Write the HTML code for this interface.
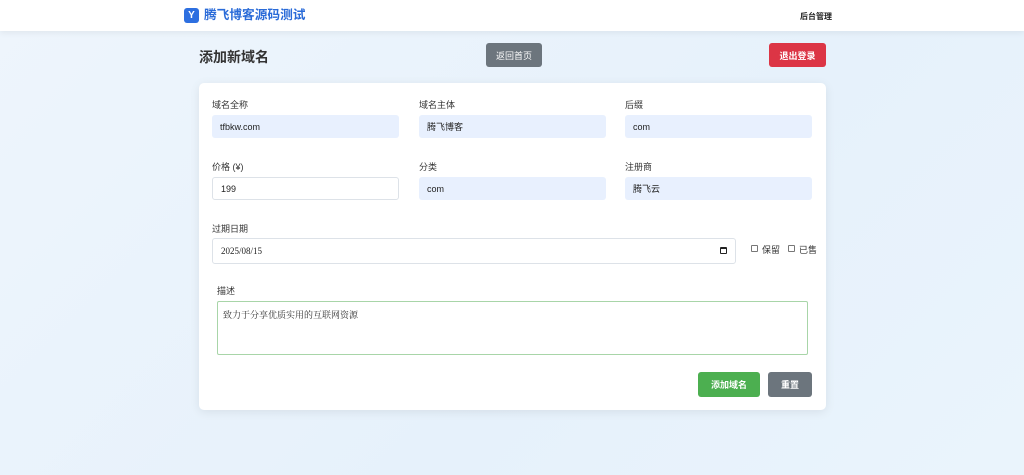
<!DOCTYPE html>
<html><head><meta charset="utf-8"><style>
*{box-sizing:border-box;margin:0;padding:0}
body{width:1024px;height:475px;overflow:hidden;background:linear-gradient(135deg,#eef5fc,#e6f1fb 60%,#eaf4fc);font-family:"Liberation Sans","Noto Sans CJK SC",sans-serif;position:relative;color:#333}
.a{position:absolute}
.nav{left:0;top:0;width:1024px;height:31px;background:#fff;box-shadow:0 2px 6px rgba(0,0,0,.06)}
.btn{position:absolute;color:#fff;font-size:9px;display:flex;align-items:center;justify-content:center;border-radius:3px}
.card{left:199px;top:83px;width:627px;height:327px;background:#fff;border-radius:5px;box-shadow:0 2px 10px rgba(0,0,0,.08)}
.lb{position:absolute;font-size:9px;color:#333}
.in{position:absolute;width:187px;height:23px;background:#e8f0fe;border-radius:3px;font-size:9px;padding-left:8px;display:flex;align-items:center;color:#222}
.w{background:#fff;border:1px solid #dde2e8}
.cb{position:absolute;width:7px;height:7px;border:1px solid #777;border-radius:1px}
</style></head><body>
<div class="a nav"></div>
<div class="a" style="left:184px;top:8px;width:15px;height:15px;background:#2d6fe0;border-radius:3px;color:#fff;font-size:10px;font-weight:bold;text-align:center;line-height:15px">Y</div>
<div class="a" style="left:204px;top:5px;font-size:12.7px;line-height:20px;font-weight:bold;color:#2a6bd8">腾飞博客源码测试</div>
<div class="a" style="left:800px;top:11px;font-size:8px;font-weight:bold;color:#222">后台管理</div>
<div class="a" style="left:199px;top:47px;font-size:14px;font-weight:bold;color:#333">添加新域名</div>
<div class="btn" style="left:486px;top:43px;width:56px;height:24px;background:#6c757d">返回首页</div>
<div class="btn" style="left:769px;top:43px;width:57px;height:24px;background:#dc3545;font-weight:bold">退出登录</div>
<div class="a card"></div>
<div class="lb" style="left:212px;top:98px">域名全称</div>
<div class="lb" style="left:419px;top:98px">域名主体</div>
<div class="lb" style="left:625px;top:98px">后缀</div>
<div class="in" style="left:212px;top:115px">tfbkw.com</div>
<div class="in" style="left:419px;top:115px">腾飞博客</div>
<div class="in" style="left:625px;top:115px">com</div>
<div class="lb" style="left:212px;top:160px">价格 (¥)</div>
<div class="lb" style="left:419px;top:160px">分类</div>
<div class="lb" style="left:625px;top:160px">注册商</div>
<div class="in w" style="left:212px;top:177px">199</div>
<div class="in" style="left:419px;top:177px">com</div>
<div class="in" style="left:625px;top:177px">腾飞云</div>
<div class="lb" style="left:212px;top:222px">过期日期</div>
<div class="in w" style="left:212px;top:238px;width:524px;height:26px;font-family:'Liberation Serif',serif;font-size:9px">2025/08/15</div>
<div class="a" style="left:720px;top:247px;width:7px;height:7px;border:1.5px solid #222;border-top-width:2.5px;border-radius:1px"></div>
<div class="cb" style="left:751px;top:245px"></div>
<div class="lb" style="left:762px;top:243px">保留</div>
<div class="cb" style="left:788px;top:245px"></div>
<div class="lb" style="left:799px;top:243px">已售</div>
<div class="lb" style="left:217px;top:284px">描述</div>
<div class="a" style="left:217px;top:301px;width:591px;height:54px;border:1px solid #a8d5a8;border-radius:2px;font-size:9px;padding:6px 5px;font-family:'Liberation Serif','Noto Serif CJK SC',serif">致力于分享优质实用的互联网资源</div>
<div class="btn" style="left:698px;top:372px;width:62px;height:25px;background:#4caf50;font-weight:bold">添加域名</div>
<div class="btn" style="left:768px;top:372px;width:44px;height:25px;background:#6c757d;font-weight:bold">重置</div>
</body></html>
